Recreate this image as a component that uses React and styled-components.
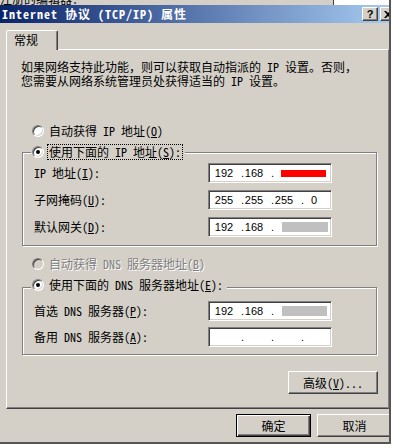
import React from 'react';
import styled, { createGlobalStyle, css } from 'styled-components';

const FACE = '#D4D0C8';
const CJK = `"Noto Sans Mono CJK SC", "Noto Sans CJK SC", "Liberation Sans", sans-serif`;

const GlobalStyle = createGlobalStyle`
  html, body { margin: 0; padding: 0; background: #ffffff; }
  body { width: 395px; height: 448px; overflow: hidden; font-family: ${CJK}; font-size: 12px; }
  * { box-sizing: border-box; }
`;

const Frame = styled.div`
  width: 391px;
  height: 444px;
  border-right: 2px solid #555555;
  border-bottom: 2px solid #555555;
  overflow: hidden;
  background: ${FACE};
  display: flex;
  flex-direction: column;
`;

const TopStrip = styled.div`
  height: 5px;
  flex: none;
  display: flex;
  overflow: hidden;
  background: ${FACE};
`;

const StripText = styled.span`
  font-family: ${CJK};
  font-size: 12px;
  line-height: 12px;
  margin-top: -7px;
  color: #000;
  white-space: nowrap;
`;

const StripBox = styled.span`
  margin-left: auto;
  width: 56px;
  background: #ffffff;
  border-left: 1px solid #404040;
  box-shadow: -8px 0 0 -7px #808080;
`;

const TitleBar = styled.div`
  height: 18px;
  flex: none;
  display: flex;
  align-items: center;
  padding-left: 2px;
  background: linear-gradient(to right, #0a246a, #a6caf0);
  color: #ffffff;
`;

const TitleText = styled.span`
  font-family: ${CJK};
  font-weight: bold;
  font-size: 12px;
  letter-spacing: 1px;
  white-space: nowrap;
  line-height: 14px;
`;

const TitleButtons = styled.div`
  margin-left: auto;
  margin-right: -7px;
  display: flex;
  gap: 2px;
`;

const raised = css`
  background: ${FACE};
  border: 1px solid;
  border-color: #ffffff #404040 #404040 #ffffff;
  box-shadow: inset -1px -1px 0 #808080;
`;

const CaptionButton = styled.span`
  ${raised};
  width: 16px;
  height: 14px;
  display: flex;
  align-items: center;
  justify-content: center;
  color: #000;
  font-family: "Liberation Sans", Arial, sans-serif;
  font-weight: bold;
  font-size: 11px;
  line-height: 12px;
`;

const WindowBody = styled.div`
  flex: 1;
  padding: 7px 0 0 6px;
  display: flex;
  flex-direction: column;
`;

const TabStrip = styled.div`
  display: flex;
  position: relative;
  z-index: 1;
`;

const Tab = styled.div`
  width: 52px;
  height: 20px;
  margin-bottom: -1px;
  background: ${FACE};
  border-left: 1px solid #ffffff;
  border-top: 1px solid #ffffff;
  border-right: 1px solid #404040;
  box-shadow: inset -1px 0 0 #808080;
  border-radius: 2px 2px 0 0;
  padding: 2px 0 0 7px;
  font-family: ${CJK};
  font-size: 12px;
  line-height: 14px;
  color: #000;
`;

const Panel = styled.div`
  width: 383px;
  height: 360px;
  border-top: 1px solid #ffffff;
  border-left: 1px solid #ffffff;
  border-right: 1px solid #808080;
  border-bottom: 1px solid #404040;
  box-shadow: inset 0 -1px 0 #808080;
  display: flex;
  flex-direction: column;
`;

const Desc = styled.div`
  margin: 10px 0 0 14px;
  font-size: 12px;
  line-height: 14px;
  color: #000;
  white-space: nowrap;
`;

const DescLine = styled.div`
  height: 14px;
`;

const Column = styled.div`
  margin-left: 15px;
  width: 355px;
  display: flex;
  flex-direction: column;
`;

const RadioRow = styled.div`
  display: flex;
  align-items: center;
  gap: 3px;
  height: 16px;
  margin: ${(p) => p.$mt || 0}px 0 0 10px;
  color: ${(p) => (p.$disabled ? '#808080' : '#000')};
  text-shadow: ${(p) => (p.$disabled ? '1px 1px 0 #ffffff' : 'none')};
`;

const RadioCircle = styled.span`
  width: 12px;
  height: 12px;
  flex: none;
  border-radius: 50%;
  border: 1px solid;
  border-color: #808080 #ffffff #ffffff #808080;
  background: ${(p) => (p.$disabled ? FACE : '#ffffff')};
  box-shadow: inset 1px 1px 0 #404040, inset -1px -1px 0 ${FACE};
  display: flex;
  align-items: center;
  justify-content: center;
`;

const RadioDot = styled.span`
  width: 4px;
  height: 4px;
  border-radius: 50%;
  background: #000;
`;

const RadioLabel = styled.span`
  font-size: 12px;
  line-height: 14px;
  padding: 0 1px;
  border: 1px ${(p) => (p.$focus ? 'dotted #000' : 'solid transparent')};
  white-space: nowrap;
`;

const Group = styled.div`
  margin-top: ${(p) => p.$mt}px;
  padding-bottom: ${(p) => p.$pb}px;
  border: 1px solid #808080;
  box-shadow: inset 1px 1px 0 #ffffff, 1px 1px 0 #ffffff;
  display: flex;
  flex-direction: column;
`;

const Legend = styled(RadioRow)`
  margin: ${(p) => p.$lift}px 0 0 8px;
  padding: 0 2px 0 1px;
  width: fit-content;
  background: ${FACE};
`;

const Rows = styled.div`
  margin-top: ${(p) => p.$mt}px;
  display: flex;
  flex-direction: column;
  gap: ${(p) => p.$gap}px;
`;

const FieldRow = styled.div`
  display: grid;
  grid-template-columns: 174px 124px;
  align-items: center;
  padding-left: 11px;
`;

const FieldLabel = styled.span`
  font-size: 12px;
  line-height: 14px;
  color: #000;
  white-space: nowrap;
`;

const IpBox = styled.div`
  width: 124px;
  height: 20px;
  background: #ffffff;
  border: 1px solid;
  border-color: #808080 #ffffff #ffffff #808080;
  box-shadow: inset 1px 1px 0 #404040, inset -1px -1px 0 ${FACE};
  display: flex;
  align-items: center;
  padding-left: 5px;
  font-family: "Liberation Sans", Arial, sans-serif;
  font-size: 11px;
  line-height: 12px;
  color: #000;
`;

const Octet = styled.span`
  width: 20px;
  flex: none;
  text-align: center;
`;

const Dot = styled.span`
  width: 10px;
  flex: none;
  text-align: right;
`;

const Mask = styled.span`
  flex: none;
  width: ${(p) => p.$w}px;
  height: ${(p) => p.$h}px;
  margin-left: ${(p) => p.$ml}px;
  background: ${(p) => p.$c};
`;

const Button = styled.button`
  ${raised};
  width: ${(p) => p.$w}px;
  height: 23px;
  padding: 0;
  margin: 0;
  flex: none;
  font-family: ${CJK};
  font-size: 12px;
  line-height: 14px;
  color: #000;
  ${(p) =>
    p.$default &&
    css`
      border: 1px solid #000000;
      box-shadow: inset 1px 1px 0 #ffffff, inset -1px -1px 0 #404040, inset -2px -2px 0 #808080;
    `}
`;

const AdvancedButton = styled(Button)`
  margin-top: 16px;
  align-self: flex-end;
  margin-right: -1px;
`;

const Footer = styled.div`
  margin-top: 5px;
  display: flex;
  justify-content: flex-end;
  gap: 6px;
  margin-right: -3px;
`;

function Radio({ checked, disabled }) {
  return (
    <RadioCircle $disabled={disabled}>{checked && <RadioDot />}</RadioCircle>
  );
}

function Ip({ parts = ['', '', '', ''], mask }) {
  return (
    <IpBox>
      <Octet>{parts[0]}</Octet>
      <Dot>.</Dot>
      <Octet>{parts[1]}</Octet>
      <Dot>.</Dot>
      {mask ? (
        <Mask $w={mask.w} $h={mask.h} $ml={mask.ml} $c={mask.c} />
      ) : (
        <>
          <Octet>{parts[2]}</Octet>
          <Dot>.</Dot>
          <Octet>{parts[3]}</Octet>
        </>
      )}
    </IpBox>
  );
}

function Field({ label, u, suffix = ':', children }) {
  return (
    <FieldRow>
      <FieldLabel>
        {label}(<u>{u}</u>){suffix}
      </FieldLabel>
      {children}
    </FieldRow>
  );
}

export default function App() {
  return (
    <>
      <GlobalStyle />
      <Frame>
        <TopStrip>
          <StripText>注册的编辑器：</StripText>
          <StripBox />
        </TopStrip>
        <TitleBar>
          <TitleText>Internet 协议 (TCP/IP) 属性</TitleText>
          <TitleButtons>
            <CaptionButton>?</CaptionButton>
            <CaptionButton>
              <svg width="8" height="7" viewBox="0 0 8 7">
                <path d="M0 0 L2 0 L4 2 L6 0 L8 0 L5 3.5 L8 7 L6 7 L4 5 L2 7 L0 7 L3 3.5 Z" fill="#000" />
              </svg>
            </CaptionButton>
          </TitleButtons>
        </TitleBar>
        <WindowBody>
          <TabStrip>
            <Tab>常规</Tab>
          </TabStrip>
          <Panel>
            <Desc>
              <DescLine>如果网络支持此功能，则可以获取自动指派的 IP 设置。否则，</DescLine>
              <DescLine>您需要从网络系统管理员处获得适当的 IP 设置。</DescLine>
            </Desc>
            <Column>
              <RadioRow $mt={35}>
                <Radio />
                <RadioLabel>
                  自动获得 IP 地址(<u>O</u>)
                </RadioLabel>
              </RadioRow>

              <Group $mt={13} $pb={8}>
                <Legend $lift={-9}>
                  <Radio checked />
                  <RadioLabel $focus>
                    使用下面的 IP 地址(<u>S</u>):
                  </RadioLabel>
                </Legend>
                <Rows $mt={3} $gap={7}>
                  <Field label="IP 地址" u="I">
                    <Ip parts={['192', '168']} mask={{ w: 45, h: 7, ml: 7, c: '#ff0000' }} />
                  </Field>
                  <Field label="子网掩码" u="U">
                    <Ip parts={['255', '255', '255', '0']} />
                  </Field>
                  <Field label="默认网关" u="D">
                    <Ip parts={['192', '168']} mask={{ w: 46, h: 10, ml: 8, c: '#c0c0c0' }} />
                  </Field>
                </Rows>
              </Group>

              <RadioRow $mt={10} $disabled>
                <Radio disabled />
                <RadioLabel>
                  自动获得 DNS 服务器地址(<u>B</u>)
                </RadioLabel>
              </RadioRow>

              <Group $mt={15} $pb={7}>
                <Legend $lift={-11}>
                  <Radio checked />
                  <RadioLabel>
                    使用下面的 DNS 服务器地址(<u>E</u>):
                  </RadioLabel>
                </Legend>
                <Rows $mt={8} $gap={6}>
                  <Field label="首选 DNS 服务器" u="P">
                    <Ip parts={['192', '168']} mask={{ w: 45, h: 10, ml: 8, c: '#c0c0c0' }} />
                  </Field>
                  <Field label="备用 DNS 服务器" u="A">
                    <Ip />
                  </Field>
                </Rows>
              </Group>

              <AdvancedButton $w={90}>
                高级(<u>V</u>)...
              </AdvancedButton>
            </Column>
          </Panel>
          <Footer>
            <Button $w={75} $default>
              确定
            </Button>
            <Button $w={75}>取消</Button>
          </Footer>
        </WindowBody>
      </Frame>
    </>
  );
}
